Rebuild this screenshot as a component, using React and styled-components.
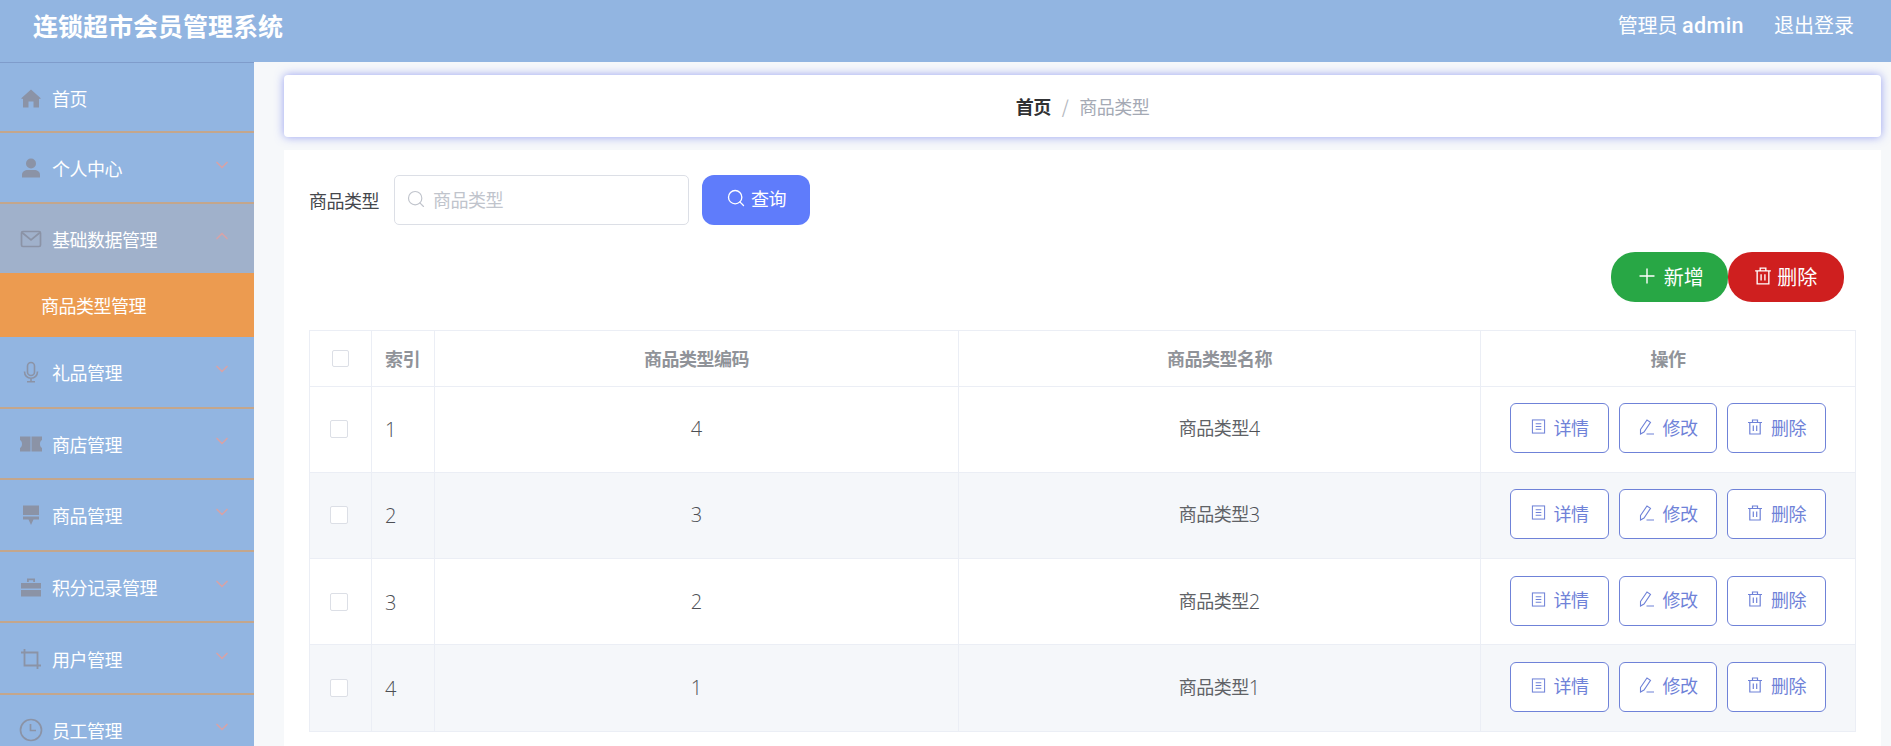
import React from 'react';
import styled, { createGlobalStyle } from 'styled-components';
import { ChevronDown, ChevronUp, Plus, Search } from 'lucide-react';

const GlobalStyle = createGlobalStyle`
  html, body {
    margin: 0;
    padding: 0;
    height: 100%;
    overflow: hidden;
    background: #f6f8fa;
  }
  * {
    box-sizing: border-box;
  }
  body {
    font-family: "Noto Sans CJK SC", "Liberation Sans", sans-serif;
    font-size: 18px;
    letter-spacing: -0.5px;
  }
`;

const HomeIcon = () => (
  <svg viewBox="0 0 24 24" width="24" height="24" fill="currentColor">
    <path d="M12 3.500 2 12.500l2 .5v8.500h5.500v-6h5v6H20V13l2-.5z" />
  </svg>
);
const UserIcon = () => (
  <svg viewBox="0 0 24 24" width="24" height="24" fill="currentColor">
    <circle cx="12" cy="7.500" r="5" />
    <path d="M3 19c0-3.300 2.600-5 6-5h6c3.400 0 6 1.700 6 5v2.500H3z" />
  </svg>
);
const MailIcon = () => (
  <svg viewBox="0 0 24 24" width="24" height="24" fill="none" stroke="currentColor" strokeWidth="1.700">
    <rect x="2.500" y="4.500" width="19" height="15" rx="1.500" />
    <path d="M3 5.500 12 13l9-7.500" />
  </svg>
);
const MicIcon = () => (
  <svg viewBox="0 0 24 24" width="24" height="24" fill="none" stroke="currentColor" strokeWidth="1.600">
    <rect x="8.500" y="2.500" width="7" height="13" rx="3.500" />
    <path d="M5.500 11.500c0 4 2.800 6.800 6.500 6.800s6.500-2.800 6.500-6.800M12 18.300v3.200M8 21.800h8" />
  </svg>
);
const TicketIcon = () => (
  <svg viewBox="0 0 24 24" width="24" height="24" fill="currentColor">
    <path d="M1 4.500h10.500v15H1V16c1.500-.8 2-2.400 2-4s-.5-3.200-2-4zM12.500 4.500H23V8c-1.500.8-2 2.400-2 4s.5 3.200 2 4v3.500H12.500z" />
  </svg>
);
const BrushIcon = () => (
  <svg viewBox="0 0 24 24" width="24" height="24" fill="currentColor">
    <path d="M4 2.500h16v9.500H4zM4 13.500h16v3h-5.500L12 22l-2.500-5.500H4z" />
  </svg>
);
const CaseIcon = () => (
  <svg viewBox="0 0 24 24" width="24" height="24" fill="currentColor">
    <path d="M8 7V3.500h8V7h-1.800V5.200H9.800V7zM2 8h20v5.500H2zM2 15h20v6.500H2z" />
  </svg>
);
const CropIcon = () => (
  <svg viewBox="0 0 24 24" width="24" height="24" fill="none" stroke="currentColor" strokeWidth="1.800">
    <path d="M2 5.500h16.500V22M5.500 2v16.500H22" />
  </svg>
);
const ClockIcon = () => (
  <svg viewBox="0 0 24 24" width="24" height="24" fill="none" stroke="currentColor" strokeWidth="1.700">
    <circle cx="12" cy="12" r="10.500" />
    <path d="M11.500 6v6.500H17" />
  </svg>
);
const DocIcon = () => (
  <svg viewBox="0 0 16 16" width="15" height="15" fill="none" stroke="currentColor" strokeWidth="1.100">
    <rect x="1.500" y="1" width="13" height="14" />
    <path d="M5 5h6M5 8h6M5 11h6" />
  </svg>
);
const PenIcon = () => (
  <svg viewBox="0 0 16 16" width="16" height="16" fill="none" stroke="currentColor" strokeWidth="1.100">
    <path d="M1.500 10.500 8 1l3.500 2.300L5 13l-3.500 2zM7.500 15H15" />
  </svg>
);
const TrashIcon = ({ size = 16 }) => (
  <svg viewBox="0 0 16 16" width={size} height={size} fill="none" stroke="currentColor" strokeWidth="1.200">
    <path d="M1 3.500h14M5.500 3.500V1h5v2.500M2.800 3.500V15h10.400V3.500M6.300 6.500v5.500M9.700 6.500v5.500" />
  </svg>
);

const menu = [
  { label: '首页', icon: <HomeIcon />, plain: true, height: 70 },
  { label: '个人中心', icon: <UserIcon />, height: 71 },
  { label: '基础数据管理', icon: <MailIcon />, open: true, height: 69, children: ['商品类型管理'] },
  { label: '礼品管理', icon: <MicIcon />, height: 71.5 },
  { label: '商店管理', icon: <TicketIcon /> },
  { label: '商品管理', icon: <BrushIcon /> },
  { label: '积分记录管理', icon: <CaseIcon /> },
  { label: '用户管理', icon: <CropIcon /> },
  { label: '员工管理', icon: <ClockIcon /> }
];

const rows = [
  { id: 1, code: '4', name: '商品类型', num: '4' },
  { id: 2, code: '3', name: '商品类型', num: '3' },
  { id: 3, code: '2', name: '商品类型', num: '2' },
  { id: 4, code: '1', name: '商品类型', num: '1' }
];

const App = () => (
  <>
    <GlobalStyle />
    <Page>
      <Header>
        <Title>连锁超市会员管理系统</Title>
        <HeaderRight>
          <span>
            管理员 <AdminName>admin</AdminName>
          </span>
          <span>退出登录</span>
        </HeaderRight>
      </Header>
      <Body>
        <Sidebar>
          {menu.map(item => (
            <React.Fragment key={item.label}>
              <MenuItem $open={item.open} $height={item.height || 71.6}>
                <MenuIcon>{item.icon}</MenuIcon>
                {item.label}
                {!item.plain && (
                  <MenuArrow>
                    {item.open ? <ChevronUp size={20} /> : <ChevronDown size={20} />}
                  </MenuArrow>
                )}
              </MenuItem>
              {item.children &&
                item.children.map(child => <SubItem key={child}>{child}</SubItem>)}
            </React.Fragment>
          ))}
        </Sidebar>
        <Main>
          <Breadcrumb>
            <strong>首页</strong>
            <Slash>/</Slash>
            <CrumbCurrent>商品类型</CrumbCurrent>
          </Breadcrumb>
          <Card>
            <SearchRow>
              <SearchLabel>商品类型</SearchLabel>
              <SearchBox>
                <Search size={20} strokeWidth={1.4} />
                <SearchInput placeholder="商品类型" readOnly />
              </SearchBox>
              <QueryButton>
                <Search size={20} strokeWidth={1.6} />
                查询
              </QueryButton>
            </SearchRow>
            <Toolbar>
              <PillButton $bg="#28a745">
                <Plus size={24} strokeWidth={1.4} />
                新增
              </PillButton>
              <PillButton $bg="#cf1f1f">
                <TrashIcon size={18} />
                删除
              </PillButton>
            </Toolbar>
            <Table>
              <colgroup>
                <col width="62" />
                <col width="63" />
                <col width="524" />
                <col width="522" />
                <col width="375" />
              </colgroup>
              <thead>
                <tr>
                  <Th $center>
                    <HeadCheck />
                  </Th>
                  <Th>索引</Th>
                  <Th $center>商品类型编码</Th>
                  <Th $center>商品类型名称</Th>
                  <Th $center>操作</Th>
                </tr>
              </thead>
              <tbody>
                {rows.map(row => (
                  <Row key={row.id}>
                    <Td>
                      <RowCheck />
                    </Td>
                    <Td>
                      <Digit>{row.id}</Digit>
                    </Td>
                    <Td $center>
                      <Digit>{row.code}</Digit>
                    </Td>
                    <Td $center>
                      {row.name}
                      <Digit>{row.num}</Digit>
                    </Td>
                    <Td $center>
                      <Actions>
                        <ActionButton $width={99}>
                          <DocIcon />
                          详情
                        </ActionButton>
                        <ActionButton $width={98}>
                          <PenIcon />
                          修改
                        </ActionButton>
                        <ActionButton $width={99}>
                          <TrashIcon />
                          删除
                        </ActionButton>
                      </Actions>
                    </Td>
                  </Row>
                ))}
              </tbody>
            </Table>
          </Card>
        </Main>
      </Body>
    </Page>
  </>
);

const Page = styled.div`
  display: flex;
  flex-direction: column;
  height: 100vh;
  overflow: hidden;
`;
const Header = styled.header`
  display: flex;
  justify-content: space-between;
  flex: 0 0 62px;
  padding: 0 37px 0 33px;
  background: #92b5e1;
  color: #fff;
  line-height: 50px;
  letter-spacing: 0;
`;
const Title = styled.div`
  font-size: 25px;
  font-weight: 700;
`;
const HeaderRight = styled.div`
  display: flex;
  gap: 30px;
  font-size: 20px;
`;
const AdminName = styled.span`
  font-family: Roboto, sans-serif;
  font-size: 21.500px;
  font-weight: 500;
  letter-spacing: 0.4px;
`;
const Body = styled.div`
  display: flex;
  flex: 1;
  min-height: 0;
`;
const Sidebar = styled.aside`
  flex: 0 0 254px;
  background: #92b5e1;
  border-top: 1px solid #7f9ccb;
  color: #fff;
  overflow: hidden;
`;
const MenuItem = styled.div`
  display: flex;
  align-items: center;
  height: ${props => props.$height}px;
  padding: 1px 22px 0 19px;
  background: ${props => (props.$open ? '#a0b1cb' : 'transparent')};
  border-bottom: ${props => (props.$open ? '0' : '2px solid #c3a68c')};
  line-height: 1;
`;
const MenuIcon = styled.span`
  display: flex;
  margin-right: 9px;
  color: #8b93a6;
`;
const MenuArrow = styled.span`
  display: flex;
  margin-left: auto;
  margin-bottom: 6px;
  color: #d6a3a8;
`;
const SubItem = styled.div`
  display: flex;
  align-items: center;
  height: 64px;
  padding-left: 41px;
  background: #ec9b50;
`;
const Main = styled.main`
  flex: 1;
  min-width: 0;
  padding: 13px 10px 0 30px;
  background: #f6f8fa;
`;
const Breadcrumb = styled.div`
  display: flex;
  align-items: center;
  justify-content: center;
  gap: 11px;
  height: 62px;
  margin-bottom: 13px;
  border-radius: 4px;
  background: #fff;
  box-shadow: 0 0 10px rgba(72, 88, 235, 0.55);
  color: #303133;
  strong {
    font-weight: 700;
  }
`;
const Slash = styled.span`
  color: #b4b8c0;
`;
const CrumbCurrent = styled.span`
  color: #a4a9b4;
`;
const Card = styled.section`
  height: 700px;
  padding: 25px;
  background: #fff;
`;
const SearchRow = styled.div`
  display: flex;
  align-items: center;
  height: 50px;
`;
const SearchLabel = styled.label`
  width: 70px;
  margin-right: 15px;
  color: #45474c;
  white-space: nowrap;
`;
const SearchBox = styled.div`
  display: flex;
  align-items: center;
  gap: 7px;
  width: 295px;
  height: 50px;
  padding: 0 0 2px 11px;
  border: 1px solid #dcdfe6;
  border-radius: 5px;
  color: #c0c4cc;
`;
const SearchInput = styled.input`
  flex: 1;
  min-width: 0;
  padding: 0;
  border: 0;
  outline: 0;
  font: inherit;
  letter-spacing: inherit;
  &::placeholder {
    color: #c0c4cc;
  }
`;
const QueryButton = styled.button`
  display: flex;
  align-items: center;
  justify-content: center;
  gap: 5px;
  width: 108px;
  height: 50px;
  margin-left: 13px;
  padding: 0 0 4px;
  border: 0;
  border-radius: 12px;
  background: #5f7cfb;
  color: #fff;
  font: inherit;
  letter-spacing: inherit;
`;
const Toolbar = styled.div`
  display: flex;
  justify-content: flex-end;
  margin: 27px 12px 28px 0;
`;
const PillButton = styled.button`
  display: flex;
  align-items: center;
  justify-content: center;
  gap: 5px;
  width: 116.500px;
  height: 50px;
  padding: 0 0 2px;
  border: 0;
  border-radius: 24px;
  background: ${props => props.$bg};
  color: #fff;
  font: inherit;
  font-size: 20px;
  letter-spacing: 0;
`;
const Table = styled.table`
  width: 1546px;
  border-collapse: collapse;
  table-layout: fixed;
`;
const Th = styled.th`
  height: 55.500px;
  padding: 0 0 0 13px;
  border: 1px solid #ebeef5;
  color: #909399;
  font-weight: 700;
  white-space: nowrap;
  text-align: ${props => (props.$center ? 'center' : 'left')};
  &:first-child {
    padding: 0;
  }
  &:nth-child(n + 3) {
    padding: 0;
  }
`;
const Row = styled.tr`
  height: 86.250px;
  &:nth-child(even) {
    background: #f5f7fa;
  }
`;
const Td = styled.td`
  padding: ${props => (props.$center ? '0 14px 2px' : '0 13px 0')};
  border: 1px solid #ebeef5;
  color: #606266;
  text-align: ${props => (props.$center ? 'center' : 'left')};
`;
const Digit = styled.span`
  font-family: "Open Sans", sans-serif;
  font-size: 20px;
  font-weight: 300;
  color: #4d4f54;
  letter-spacing: 0;
  vertical-align: -1px;
`;
const HeadCheck = styled.span`
  display: block;
  width: 17px;
  height: 17px;
  margin: 0 auto;
  border: 1px solid #dcdfe6;
  border-radius: 2px;
  background: #fff;
`;
const RowCheck = styled(HeadCheck)`
  width: 18px;
  height: 18px;
  margin: 0 0 0 7px;
`;
const Actions = styled.div`
  display: flex;
  justify-content: center;
  gap: 10px;
`;
const ActionButton = styled.button`
  display: flex;
  align-items: center;
  justify-content: center;
  gap: 8px;
  width: ${props => props.$width}px;
  height: 50px;
  padding: 0 0 3px;
  border: 1px solid #6f82d8;
  border-radius: 6px;
  background: #fff;
  color: #6f82d8;
  font: inherit;
  letter-spacing: inherit;
`;

export default App;
